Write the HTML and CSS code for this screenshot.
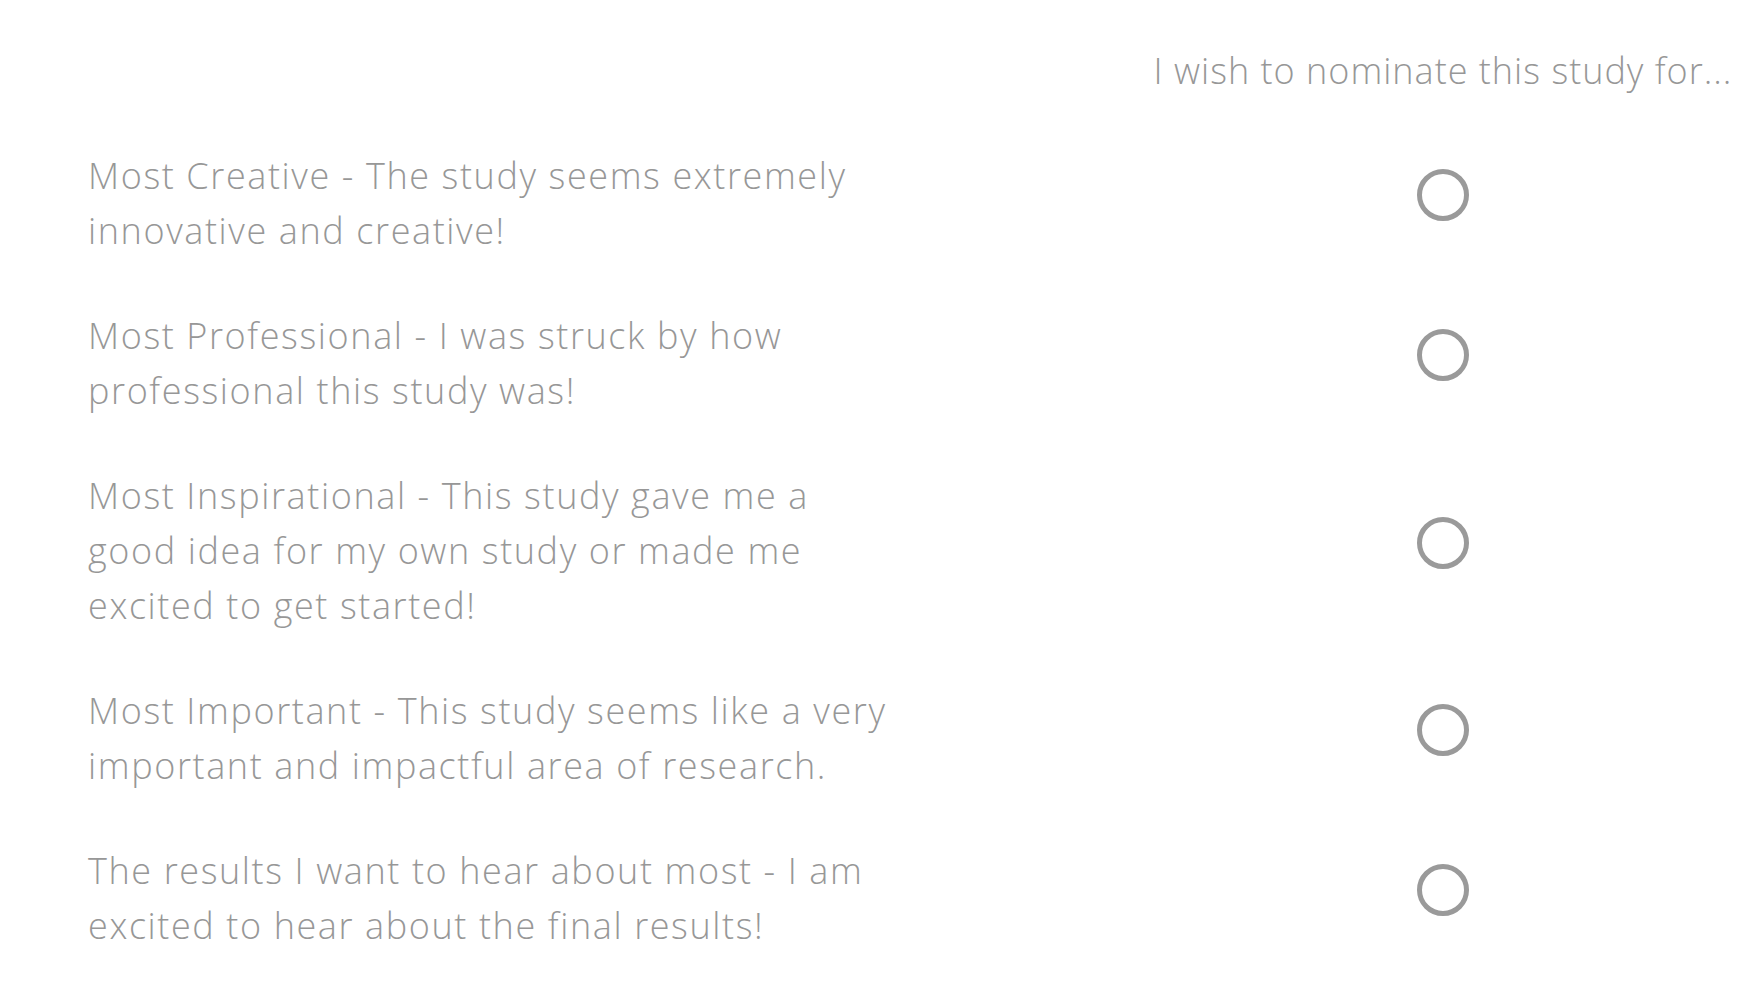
FILE: index.html
```html
<!DOCTYPE html>
<html lang="en">
<head>
<meta charset="utf-8">
<title>Nominate this study</title>
<link rel="stylesheet" href="styles.css">
</head>
<body>
<main class="survey">
  <div class="row head">
    <div class="label"></div>
    <div class="choice-head">I wish to nominate this study for...</div>
  </div>
  <div class="row">
    <label class="label" for="n1">Most Creative - The study seems extremely innovative and creative!</label>
    <div class="choice"><input class="radio" type="radio" name="nominate" id="n1"></div>
  </div>
  <div class="row">
    <label class="label" for="n2">Most Professional - I was struck by how professional this study was!</label>
    <div class="choice"><input class="radio" type="radio" name="nominate" id="n2"></div>
  </div>
  <div class="row">
    <label class="label" for="n3">Most Inspirational - This study gave me a good idea for my own study or made me excited to get started!</label>
    <div class="choice"><input class="radio" type="radio" name="nominate" id="n3"></div>
  </div>
  <div class="row">
    <label class="label" for="n4">Most Important - This study seems like a very important and impactful area of research.</label>
    <div class="choice"><input class="radio" type="radio" name="nominate" id="n4"></div>
  </div>
  <div class="row">
    <label class="label" for="n5">The results I want to hear about most - I am excited to hear about the final results!</label>
    <div class="choice"><input class="radio" type="radio" name="nominate" id="n5"></div>
  </div>
</main>
</body>
</html>
```

FILE: styles.css
```css
html, body {
  margin: 0;
  padding: 0;
  background: #ffffff;
}

body {
  font-family: "Open Sans", "Liberation Sans", sans-serif;
  font-weight: 300;
  font-size: 36px;
  line-height: 55px;
  color: #979797;
}

.survey {
  padding: 18px 0 0 88px;
}

.row {
  display: grid;
  grid-template-columns: minmax(0, 1fr) 638px;
  align-items: center;
  padding: 25px 0;
}

.label {
  display: block;
  max-width: 808px;
  letter-spacing: 1.6px;
}

.choice-head {
  text-align: center;
  white-space: nowrap;
  letter-spacing: 1px;
}

.choice {
  display: flex;
  justify-content: center;
}

.radio {
  appearance: none;
  -webkit-appearance: none;
  box-sizing: border-box;
  width: 52px;
  height: 52px;
  margin: 0 0 16px 0;
  border: 5px solid #9a9a9a;
  border-radius: 50%;
  background: #ffffff;
}
```
